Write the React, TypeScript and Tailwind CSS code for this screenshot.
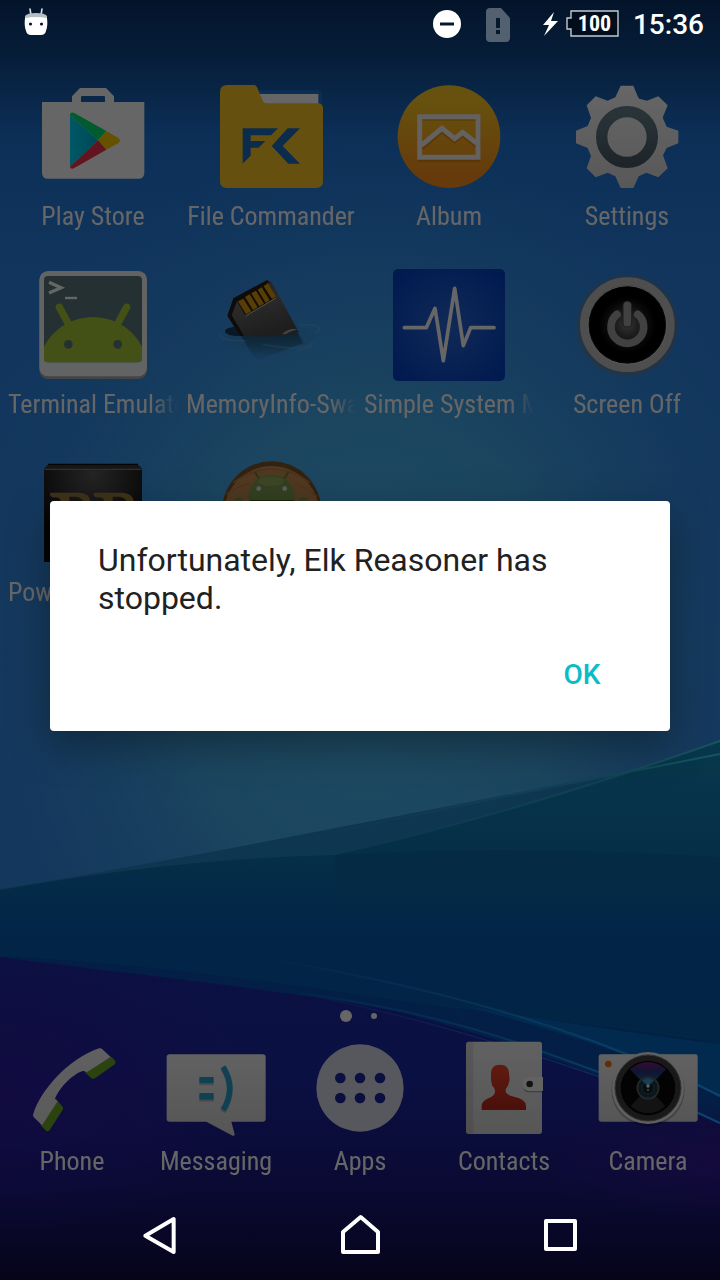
import type { ReactNode } from "react";

type LauncherItem = { label: string; icon: ReactNode; long?: boolean };

function Icon({ box, children }: { box: string; children: ReactNode }) {
  return (
    <svg viewBox={box} className="block h-full w-full" aria-hidden="true">
      {children}
    </svg>
  );
}

const playStore = (
  <Icon box="111 33 336 336">
    <path d="M216 96V79L240 54H318L342 79V96H433V308Q433 326 415 326H144Q126 326 126 308V96ZM243 96H315V82Q315 78 311 78H247Q243 78 243 82Z" fill="#fff" fillRule="evenodd" />
    <path d="M210 134V290L294 211Z" fill="url(#playBlue)" />
    <path d="M210 134Q212 124 223 129L319 183L294 211Z" fill="#00e676" />
    <path d="M319 183L354 203Q366 212 354 220L319 239L294 211Z" fill="#ffca00" />
    <path d="M210 290Q212 300 223 294L319 239L294 211Z" fill="#f5344c" />
    <defs>
      <linearGradient id="playBlue" x1="0" x2="1" y1="0" y2="0">
        <stop offset="0" stopColor="#00dcff" />
        <stop offset="1" stopColor="#00b4d8" />
      </linearGradient>
    </defs>
  </Icon>
);

const fileCommander = (
  <Icon box="645 33 336 336">
    <path d="M770 61H955Q966 62 966 74V120H770Z" fill="#1974d1" />
    <path d="M775 72H955V115H775Z" fill="#fff" />
    <path d="M682 45H762Q768 45 771 52L789 94Q792 100 799 100H955Q969 101 969 116V334Q969 354 949 354H680Q660 354 660 334V67Q660 45 682 45Z" fill="#ffc928" />
    <path d="M728 175H834L813 196H752V213H796L776 233H752V257L728 281ZM863 175H900L848 228L900 281H865L815 228Z" fill="#1d6fc0" />
  </Icon>
);

const album = (
  <Icon box="99 33 336 336">
    <defs>
      <linearGradient id="albumFill" x1="0" x2="0" y1="0" y2="1">
        <stop offset="0.15" stopColor="#ffcb22" />
        <stop offset="0.9" stopColor="#ff901c" />
      </linearGradient>
    </defs>
    <circle cx="267" cy="200" r="154" fill="url(#albumFill)" />
    <g fill="none" stroke="#b4500a" strokeOpacity="0.35" strokeWidth="15" transform="translate(0 5)">
      <path d="M179 140H354V263H179ZM184 229L246 177L284 207L308 188L350 222" />
    </g>
    <g fill="none" stroke="#f7f5f2" strokeWidth="15">
      <path d="M179 140H354V262H179Z" />
      <path d="M184 226L246 175L284 206L308 187L350 220" />
    </g>
  </Icon>
);

const settings = (
  <Icon box="633 33 336 336">
    <defs>
      <linearGradient id="gearFill" x1="0" x2="0" y1="0" y2="1">
        <stop offset="0" stopColor="#fff" />
        <stop offset="1" stopColor="#dcdcdc" />
      </linearGradient>
      <linearGradient id="ringFill" x1="0" x2="0" y1="0" y2="1">
        <stop offset="0" stopColor="#66828f" />
        <stop offset="1" stopColor="#4a5d69" />
      </linearGradient>
    </defs>
    <path
      d="M782 47H820L834 81Q836 88 844 88L861 92L895 79L923 106L909 140Q908 143 910 148L920 170L955 182V220L920 234L909 256L923 295L895 322L859 308L836 319L820 354H782L766 319L743 308L707 322L680 295L693 258L683 234L648 220V182L683 168L693 144L680 106L707 79L743 92L766 82Z"
      fill="url(#gearFill)"
    />
    <circle cx="801" cy="201" r="76" fill="none" stroke="url(#ringFill)" strokeWidth="34" />
  </Icon>
);

const terminal = (
  <Icon box="111 42 336 336">
    <rect x="118" y="52" width="323" height="320" rx="26" fill="#a6abae" />
    <rect x="118" y="48" width="323" height="316" rx="26" fill="#f6f9fa" />
    <rect x="132" y="63" width="294" height="259" rx="12" fill="#5d7880" />
    <path d="M132 275C165 215 220 187 279 187S393 215 426 275V310Q426 322 414 322H144Q132 322 132 310Z" fill="#a9ca36" />
    <path d="M178 157L205 206M380 157L353 206" stroke="#a9ca36" strokeWidth="22" strokeLinecap="round" />
    <circle cx="205" cy="268" r="13" fill="#5d7880" />
    <circle cx="353" cy="268" r="13" fill="#5d7880" />
    <path d="M147 82L183 98L147 114" fill="none" stroke="#fff" strokeWidth="10" />
    <path d="M195 129H231" stroke="#fff" strokeWidth="7" />
  </Icon>
);

const memoryInfo = (
  <Icon box="645 42 336 336">
    <defs>
      <linearGradient id="cardFill" x1="0" x2="0.4" y1="0" y2="1">
        <stop offset="0" stopColor="#595553" />
        <stop offset="0.5" stopColor="#6b6867" />
        <stop offset="1" stopColor="#4c4b4c" />
      </linearGradient>
      <linearGradient id="cardReflection" x1="0" x2="0" y1="0" y2="1">
        <stop offset="0" stopColor="#1b435c" stopOpacity="0.75" />
        <stop offset="1" stopColor="#1b435c" stopOpacity="0" />
      </linearGradient>
      <radialGradient id="puddle">
        <stop offset="0.4" stopColor="#2f7ca8" stopOpacity="0.35" />
        <stop offset="1" stopColor="#2f7ca8" stopOpacity="0" />
      </radialGradient>
    </defs>
    <ellipse cx="805" cy="250" rx="155" ry="48" fill="url(#puddle)" />
    <ellipse cx="713" cy="229" rx="38" ry="14" fill="#143c59" />
    <path d="M722 242L770 318L910 264L892 232Z" fill="url(#cardReflection)" />
    <path d="M735 257C680 258 650 246 662 238M790 268C850 282 925 283 936 264M893 284C925 284 942 272 937 263M900 210C950 206 972 220 948 232" fill="none" stroke="#8cc0dc" strokeOpacity="0.3" strokeWidth="5" strokeLinecap="round" />
    <path d="M700 130L802 75L814 80L897 232Q845 247 780 244L720 242L682 182Z" fill="url(#cardFill)" />
    <path d="M700 130L802 75L808 84L711 138L695 181L732 242H720L682 182Z" fill="#201c1b" />
    <path d="M710 137L802 81L828 127L736 181Z" fill="#302008" />
    <path d="M714 139L730 131L754 169L738 178ZM735 126L749 118L773 157L759 165ZM754 115L768 107L792 146L778 154ZM773 104L785 97L809 136L797 143ZM791 94L804 84L828 125L816 132Z" fill="#d99a10" />
    <path d="M737 183L828 129" fill="none" stroke="#c8c8c8" strokeWidth="3" />
    <path d="M846 237Q870 216 894 224Q872 226 856 238Z" fill="#a8a8a8" />
  </Icon>
);

const systemMonitor = (
  <Icon box="99 42 336 336">
    <defs>
      <radialGradient id="monitorFill" cx="0.5" cy="0.5" r="0.65">
        <stop offset="0" stopColor="#2a68da" />
        <stop offset="1" stopColor="#0042c8" />
      </radialGradient>
    </defs>
    <rect x="99" y="42" width="336" height="336" rx="15" fill="url(#monitorFill)" />
    <path d="M133 218H199L225 160L250 317L284 100L310 272L332 218H402" fill="none" stroke="#fff" strokeWidth="11" strokeLinecap="round" strokeLinejoin="round" />
  </Icon>
);

const screenOff = (
  <Icon box="633 42 336 336">
    <defs>
      <radialGradient id="powerGlow">
        <stop offset="0.86" stopColor="#7a7a7a" />
        <stop offset="1" stopColor="#7a7a7a" stopOpacity="0" />
      </radialGradient>
      <radialGradient id="powerFill">
        <stop offset="0.1" stopColor="#6a6a6a" />
        <stop offset="0.5" stopColor="#161616" />
        <stop offset="0.65" stopColor="#000" />
        <stop offset="0.86" stopColor="#000" />
        <stop offset="0.93" stopColor="#4a4a4a" />
      </radialGradient>
    </defs>
    <circle cx="802" cy="211" r="157" fill="url(#powerGlow)" />
    <circle cx="802" cy="209" r="130" fill="url(#powerFill)" stroke="#c2c2c2" strokeWidth="24" />
    <circle cx="802" cy="210" r="118" fill="none" stroke="#dcdcdc" strokeWidth="3" />
    <path d="M771 178A49 49 0 1 0 833 178" fill="none" stroke="#a2a2a2" strokeWidth="23" strokeLinecap="round" />
    <path d="M802 152V203" stroke="#444" strokeWidth="29" strokeLinecap="round" />
    <path d="M802 152V203" stroke="#a2a2a2" strokeWidth="23" strokeLinecap="round" />
  </Icon>
);

const blackBox = (
  <Icon box="111 51 336 336">
    <defs>
      <radialGradient id="boxFill" cx="0.5" cy="0.1" r="0.7">
        <stop offset="0" stopColor="#5c5c5c" />
        <stop offset="1" stopColor="#0b0b0b" />
      </radialGradient>
    </defs>
    <path d="M132 86L146 72H412L426 86V366H132Z" fill="url(#boxFill)" />
    <path d="M132 86L146 72H412L426 86V90H132Z" fill="#383838" />
    <path d="M144 73H414" stroke="#0b0b0b" strokeWidth="4" />
    <path d="M134 88H424" stroke="#757575" strokeWidth="4" />
    <g fill="#9c803f">
      <path d="M150 162Q150 158 156 158H236Q270 160 271 184V210H250V186Q248 172 226 170H208V260H182V184Q182 172 166 172Q154 174 150 166Z" />
      <path d="M281 162Q281 158 287 158H366Q400 160 401 184V210H380V186Q378 172 356 170H338V260H312V184Q312 172 297 172Q285 174 281 166Z" />
    </g>
  </Icon>
);

const androidCoin = (
  <Icon box="645 51 336 336">
    <circle cx="815" cy="213" r="149" fill="#7d552b" />
    <circle cx="815" cy="221" r="143" fill="#c98d52" />
    <path d="M700 128Q815 45 930 128M680 162Q730 130 750 132M885 132Q920 140 950 170" fill="none" stroke="#bd8046" strokeWidth="5" />
    <path d="M766 98L782 124M864 98L848 124" stroke="#66893c" strokeWidth="7" strokeLinecap="round" />
    <path d="M743 180C745 135 770 105 815 105S884 135 886 180Z" fill="#80a04f" />
    <ellipse cx="812" cy="124" rx="38" ry="14" fill="#a5bd71" fillOpacity="0.55" />
    <circle cx="776" cy="146" r="7" fill="#e7e8e5" />
    <circle cx="854" cy="146" r="7" fill="#e7e8e5" />
    <path d="M750 180H882V200H750Z" fill="#3d5026" />
    <circle cx="717" cy="190" r="17" fill="#78984b" />
    <circle cx="910" cy="188" r="17" fill="#78984b" />
  </Icon>
);

const phone = (
  <Icon box="60 108 312 312">
    <defs>
      <linearGradient id="phoneFill" x1="0" x2="0" y1="0" y2="1">
        <stop offset="0" stopColor="#f0f0f0" />
        <stop offset="1" stopColor="#e2e2e2" />
      </linearGradient>
    </defs>
    <path d="M168 298L189 322Q190 326 188 329L149 390Q144 396 138 392L122 376Z" fill="#6cab25" />
    <path d="M254 215L334 170L346 184Q349 189 344 193L286 234Q279 239 273 234Z" fill="#6cab25" />
    <path d="M99 344C122 270 204 178 297 145Q302 143 307 148L332 171L260 217L250 212C220 220 178 262 165 296L173 304L126 376L100 350Z" fill="url(#phoneFill)" />
  </Icon>
);

const messaging = (
  <Icon box="492 108 312 312">
    <defs>
      <linearGradient id="bubbleFill" x1="0" x2="0" y1="0" y2="1">
        <stop offset="0" stopColor="#f4f4f4" />
        <stop offset="1" stopColor="#d6d6d6" />
      </linearGradient>
    </defs>
    <path d="M509 163H788Q797 163 797 172V356Q797 365 788 365H694L704 403Q704 409 698 407L619 365H509Q500 365 500 356V172Q500 163 509 163Z" fill="url(#bubbleFill)" />
    <g transform="translate(0 6)" opacity="0.2">
      <path d="M598 231H641V250H598ZM598 279H641V299H598Z" fill="#222" />
      <path d="M669 200Q710 265 669 330" fill="none" stroke="#222" strokeWidth="17" />
    </g>
    <path d="M598 231H641V250H598ZM598 279H641V299H598Z" fill="#27a3cf" />
    <path d="M669 200Q710 265 669 330" fill="none" stroke="#27a3cf" strokeWidth="17" />
  </Icon>
);

const apps = (
  <Icon box="-156 108 312 312">
    <defs>
      <mask id="appHoles">
        <rect x="-156" y="108" width="312" height="312" fill="#fff" />
        <circle cx="-59" cy="234" r="16" />
        <circle cx="0" cy="234" r="16" />
        <circle cx="60" cy="234" r="16" />
        <circle cx="-59" cy="294" r="16" />
        <circle cx="0" cy="294" r="16" />
        <circle cx="60" cy="294" r="16" />
      </mask>
    </defs>
    <circle cx="0" cy="264" r="131" fill="#ededf4" fillOpacity="0.9" mask="url(#appHoles)" />
  </Icon>
);

const contacts = (
  <Icon box="276 108 312 312">
    <defs>
      <linearGradient id="bookFill" x1="0" x2="0" y1="0" y2="1">
        <stop offset="0" stopColor="#f2f2f2" />
        <stop offset="1" stopColor="#d8d8d8" />
      </linearGradient>
      <linearGradient id="personFill" x1="0" x2="0" y1="0" y2="1">
        <stop offset="0" stopColor="#f04426" />
        <stop offset="1" stopColor="#b9261a" />
      </linearGradient>
    </defs>
    <rect x="318" y="125" width="228" height="277" rx="8" fill="url(#bookFill)" />
    <path d="M318 133Q318 125 326 125H340V402H326Q318 402 318 394Z" fill="#000" fillOpacity="0.09" />
    <path d="M365 330V316Q366 304 385 295Q407 286 405 272Q405 264 397 258L393 240V222C393 204 402 194 420 194S447 204 447 222L449 240L444 257Q436 264 437 274Q438 284 462 290Q498 297 498 318V330Z" fill="url(#personFill)" />
    <path d="M548 238H508Q489 238 489 257T508 277H548Z" fill="#000" fillOpacity="0.3" />
    <path d="M549 231H508Q488 231 488 252T508 273H549Z" fill="#f4f4f4" />
    <circle cx="509" cy="252" r="10" fill="#303030" />
  </Icon>
);

const camera = (
  <Icon box="708 108 312 312">
    <rect x="716" y="163" width="297" height="202" rx="7" fill="url(#bubbleFill)" />
    <circle cx="745" cy="192" r="10" fill="#f07010" />
    <circle cx="864" cy="269" r="110" fill="#000" fillOpacity="0.25" />
    <circle cx="864" cy="264" r="108" fill="#ededed" />
    <circle cx="864" cy="264" r="99" fill="#3f3f3f" stroke="#777" strokeWidth="3" />
    <circle cx="864" cy="264" r="82" fill="#080808" />
    <path d="M864 264L810 208A78 78 0 0 1 918 208Z" fill="url(#lensBlue)" />
    <path d="M864 264L812 318A74 74 0 0 0 916 318Z" fill="#303030" />
    <circle cx="864" cy="264" r="32" fill="#193848" stroke="#5c6264" strokeWidth="5" />
    <circle cx="864" cy="264" r="18" fill="#162024" stroke="#395562" strokeWidth="3" />
    <path d="M846 242L864 258L882 242Q864 228 846 242Z" fill="#3c9bd0" />
    <circle cx="864" cy="258" r="5" fill="#e8fbff" />
    <circle cx="864" cy="270" r="3" fill="#9ca" />
    <defs>
      <linearGradient id="lensBlue" x1="0" x2="0" y1="0" y2="1">
        <stop offset="0.05" stopColor="#7a1b7c" />
        <stop offset="0.35" stopColor="#27337e" />
        <stop offset="0.8" stopColor="#235e86" />
      </linearGradient>
    </defs>
  </Icon>
);

const homeItems: LauncherItem[] = [
  { label: "Play Store", icon: playStore },
  { label: "File Commander", icon: fileCommander },
  { label: "Album", icon: album },
  { label: "Settings", icon: settings },
  { label: "Terminal Emulato", icon: terminal, long: true },
  { label: "MemoryInfo-Swa", icon: memoryInfo, long: true },
  { label: "Simple System M", icon: systemMonitor, long: true },
  { label: "Screen Off", icon: screenOff },
  { label: "Pow", icon: blackBox, long: true },
  { label: "", icon: androidCoin },
];

const dockItems: LauncherItem[] = [
  { label: "Phone", icon: phone },
  { label: "Messaging", icon: messaging },
  { label: "Apps", icon: apps },
  { label: "Contacts", icon: contacts },
  { label: "Camera", icon: camera },
];

function Wallpaper() {
  return (
    <svg viewBox="0 0 720 1280" preserveAspectRatio="none" className="absolute inset-0 h-full w-full" aria-hidden="true">
      <defs>
        <linearGradient id="sky" x1="0" x2="0" y1="0" y2="900" gradientUnits="userSpaceOnUse">
          <stop offset="0" stopColor="#03142a" />
          <stop offset="0.06" stopColor="#061d38" />
          <stop offset="0.15" stopColor="#0c2f57" />
          <stop offset="0.3" stopColor="#11355d" />
          <stop offset="1" stopColor="#14375c" />
        </linearGradient>
        <radialGradient id="haze" cx="0" cy="0" r="1" gradientUnits="userSpaceOnUse" gradientTransform="translate(370 650) scale(430 520)">
          <stop offset="0" stopColor="#1f4c62" />
          <stop offset="0.45" stopColor="#1d4860" stopOpacity="0.85" />
          <stop offset="0.75" stopColor="#19415f" stopOpacity="0.4" />
          <stop offset="1" stopColor="#153a5f" stopOpacity="0" />
        </radialGradient>
        <linearGradient id="sea" x1="0" x2="0" y1="740" y2="1130" gradientUnits="userSpaceOnUse">
          <stop offset="0" stopColor="#08384c" />
          <stop offset="0.3" stopColor="#052e47" />
          <stop offset="0.5" stopColor="#022547" />
          <stop offset="0.8" stopColor="#022445" />
          <stop offset="1" stopColor="#03264a" />
        </linearGradient>
        <linearGradient id="deep" x1="0" x2="0" y1="950" y2="1280" gradientUnits="userSpaceOnUse">
          <stop offset="0" stopColor="#0b1144" />
          <stop offset="0.4" stopColor="#0b1042" />
          <stop offset="0.7" stopColor="#0a0a34" />
          <stop offset="1" stopColor="#06041a" />
        </linearGradient>
        <radialGradient id="violetLeft" cx="0" cy="0" r="1" gradientUnits="userSpaceOnUse" gradientTransform="translate(0 1090) scale(260 150)">
          <stop offset="0" stopColor="#120a40" stopOpacity="0.9" />
          <stop offset="1" stopColor="#120a40" stopOpacity="0" />
        </radialGradient>
        <radialGradient id="violetRight" cx="0" cy="0" r="1" gradientUnits="userSpaceOnUse" gradientTransform="translate(720 1160) scale(200 60)">
          <stop offset="0" stopColor="#140a3c" />
          <stop offset="1" stopColor="#140a3c" stopOpacity="0" />
        </radialGradient>
        <linearGradient id="glintTop" x1="330" x2="720" y1="0" y2="0" gradientUnits="userSpaceOnUse">
          <stop offset="0" stopColor="#17555f" stopOpacity="0" />
          <stop offset="0.7" stopColor="#17555f" stopOpacity="0.4" />
          <stop offset="1" stopColor="#17555f" />
        </linearGradient>
        <linearGradient id="glintLow" x1="250" x2="720" y1="0" y2="0" gradientUnits="userSpaceOnUse">
          <stop offset="0" stopColor="#0b4068" stopOpacity="0" />
          <stop offset="0.6" stopColor="#0b4068" stopOpacity="0.6" />
          <stop offset="1" stopColor="#0b4473" />
        </linearGradient>
      </defs>
      <rect width="720" height="1280" fill="url(#sky)" />
      <rect width="720" height="900" fill="url(#haze)" />
      <path d="M0 889C240 850 470 800 720 754V1280H0Z" fill="#0f3651" />
      <path d="M0 890Q180 858 335 855Q510 815 720 741V1280H0Z" fill="url(#sea)" />
      <path d="M335 855Q510 844 720 857V920H335Z" fill="url(#seaShade)" />
      <defs>
        <linearGradient id="seaShade" x1="0" x2="0" y1="850" y2="920" gradientUnits="userSpaceOnUse">
          <stop offset="0" stopColor="#042a42" stopOpacity="0.8" />
          <stop offset="1" stopColor="#042a42" stopOpacity="0" />
        </linearGradient>
      </defs>
      <path d="M0 956C190 966 330 992 430 1005S640 1030 720 1044V1280H0Z" fill="#031f46" />
      <path d="M460 1005C560 1031 650 1060 720 1095V1044Q590 1028 460 1005Z" fill="#022a4e" />
      <path d="M0 957C160 978 290 990 400 1012C500 1038 610 1078 720 1124V1280H0Z" fill="url(#deep)" />
      <path d="M0 957C160 978 290 990 400 1012V1280H0Z" fill="url(#violetLeft)" />
      <rect x="500" y="1100" width="220" height="120" fill="url(#violetRight)" />
      <g fill="none">
        <path d="M330 833C450 806 620 774 720 754M335 855Q510 815 720 741" stroke="url(#glintTop)" strokeWidth="2" />
        <path d="M280 961Q450 990 590 1040Q670 1070 720 1096" stroke="url(#glintLow)" strokeWidth="2" />
        <path d="M300 993Q440 1012 560 1058Q650 1090 720 1123" stroke="url(#glintLow)" strokeWidth="2" />
        <path d="M330 1000Q440 1022 600 1077" stroke="url(#glintLow)" />
      </g>
    </svg>
  );
}

function LauncherButton({ item }: { item: LauncherItem }) {
  return (
    <button type="button" aria-label={item.label || "Android"} className="flex min-w-0 flex-col items-center gap-[7px] px-1">
      <span className="h-28 w-28">{item.icon}</span>
      <span
        className={
          item.long
            ? "h-8 w-full overflow-hidden text-left whitespace-nowrap mask-r-from-85%"
            : "h-8 whitespace-nowrap"
        }
      >
        {item.label}
      </span>
    </button>
  );
}

function StatusBar() {
  return (
    <header className="relative flex h-12 items-center justify-between pr-4 pl-6 text-white">
      <svg viewBox="0 0 24 28" className="mb-1 h-7 w-6" aria-hidden="true">
        <path d="M6 1L7 7M18 1L17 7" stroke="#d8dde2" strokeWidth="1.6" strokeLinecap="round" />
        <path d="M1 8Q3 5 12 5T23 8V12H1Z" fill="#b5bdc5" />
        <path d="M1 10Q12 8 23 10Q24 18 22 23Q21 27 17 27H7Q3 27 2 23Q0 18 1 10Z" fill="#fff" />
        <circle cx="6.5" cy="16" r="1.6" fill="#06182e" />
        <circle cx="17.5" cy="16" r="1.6" fill="#06182e" />
      </svg>
      <div className="flex items-center">
        <svg viewBox="0 0 28 28" className="mr-[25px] h-7 w-7" aria-hidden="true">
          <circle cx="14" cy="14" r="14" fill="#fff" />
          <path d="M7 14H21" stroke="#04182e" strokeWidth="3" />
        </svg>
        <svg viewBox="0 0 24 34" className="mt-[2px] mr-8 h-[34px] w-6" aria-hidden="true">
          <path d="M4 0H15L24 10V30Q24 34 20 34H4Q0 34 0 30V4Q0 0 4 0Z" fill="#53606f" />
          <path d="M12 10V20M12 22V26" stroke="#04182e" strokeWidth="4" />
        </svg>
        <svg viewBox="0 0 16 24" className="mr-2 h-6 w-4" aria-hidden="true">
          <path d="M12 0L1 13H7L2 24L16 9H9Z" fill="#fff" />
        </svg>
        <span className="relative flex h-7 w-[53px] items-center justify-center pl-1 font-['Roboto_Condensed','Roboto',sans-serif] text-[22px] leading-7 font-bold">
          <svg viewBox="0 0 53 28" className="absolute inset-0 h-7 w-[53px]" aria-hidden="true">
            <path d="M5 1H52V26H5V19H1V8H5Z" fill="#020d1c" stroke="#c3c9cf" strokeWidth="1.4" />
          </svg>
          <span className="relative">100</span>
        </span>
        <time className="ml-[14px] pt-[2px] text-[28px] leading-8 font-medium">15:36</time>
      </div>
    </header>
  );
}

function NavButton({ label, box, d }: { label: string; box: string; d: string }) {
  return (
    <button type="button" aria-label={label} className="flex w-[200px] items-center justify-center">
      <svg viewBox={box} className="h-12 w-12" fill="none" stroke="#fff" strokeWidth="12" strokeLinejoin="round">
        <path d={d} />
      </svg>
    </button>
  );
}

export default function App() {
  return (
    <div className="relative flex min-h-screen flex-col overflow-hidden bg-[#06041a] font-['Roboto',sans-serif]">
      <Wallpaper />
      <StatusBar />
      <main className="relative flex flex-1 flex-col">
        <div className="flex flex-1 flex-col font-['Roboto_Condensed','Roboto',sans-serif] text-[26px] leading-8 text-white brightness-40 text-shadow-[1px_2px_3px_#000]">
          <section aria-label="Home screen" className="grid grid-cols-4 gap-y-[37px] px-1 pt-[33px]">
            {homeItems.map((item, i) => (
              <LauncherButton key={i} item={item} />
            ))}
          </section>
          <div className="mt-auto flex h-4 items-center justify-center gap-[19px] pr-1" aria-hidden="true">
            <span className="h-3 w-3 rounded-full bg-white shadow" />
            <span className="h-[6px] w-[6px] rounded-full bg-white shadow" />
          </div>
          <nav aria-label="Favorites" className="grid grid-cols-5 pt-3 pb-[7px]">
            {dockItems.map((item) => (
              <button key={item.label} type="button" className="flex flex-col items-center gap-[5px]">
                <span className="h-[104px] w-[104px]">{item.icon}</span>
                <span>{item.label}</span>
              </button>
            ))}
          </nav>
        </div>
        <div className="absolute inset-0 flex items-center justify-center px-[50px]">
          <div role="alertdialog" aria-labelledby="crash-message" className="flex w-full flex-col rounded bg-white px-6 pt-10 pb-5 shadow-[0_14px_40px_rgba(0,0,0,0.35)]">
            <p id="crash-message" className="px-6 text-[32px] leading-[38px] text-[#212121]">
              Unfortunately, Elk Reasoner has stopped.
            </p>
            <button type="button" className="mt-[22px] h-[72px] w-32 self-end text-[28px] leading-8 font-medium text-[#0abcc6]">
              OK
            </button>
          </div>
        </div>
      </main>
      <nav aria-label="System navigation" className="relative flex h-24 justify-center">
        <NavButton label="Back" box="108 24 144 144" d="M221 57V156L136 107Z" />
        <NavButton label="Home" box="708 24 144 144" d="M782 51L834 96V156H729V96Z" />
        <NavButton label="Recent apps" box="1308 24 144 144" d="M1338 63H1425V147H1338Z" />
      </nav>
    </div>
  );
}
